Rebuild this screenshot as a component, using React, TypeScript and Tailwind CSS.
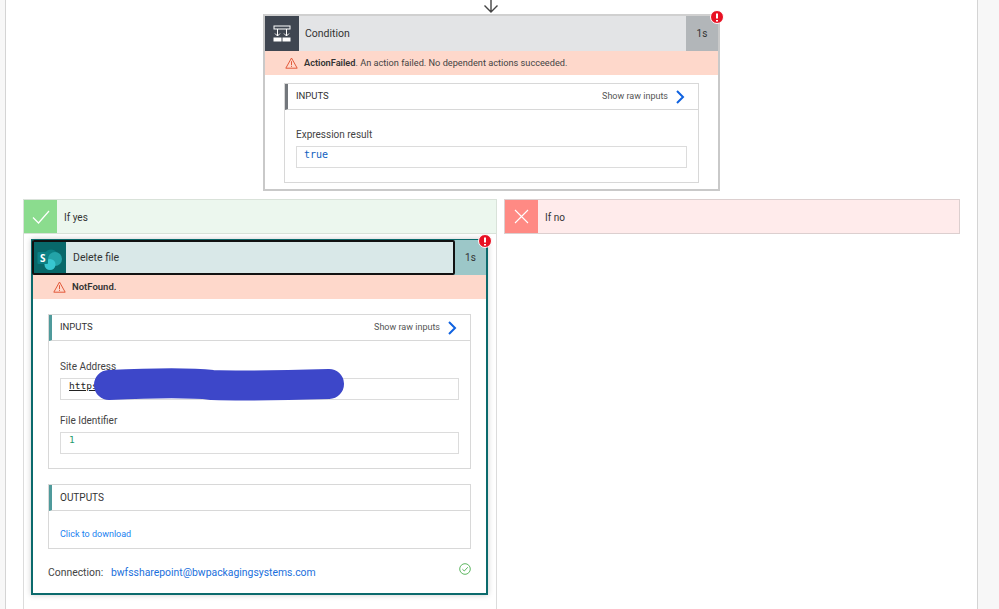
import React from "react";

const font = { fontFamily: 'Roboto, "Noto Sans", sans-serif' };
const mono = { fontFamily: '"DejaVu Sans Mono", monospace' };

function Warn() {
  return (
    <svg width="13" height="12" viewBox="0 0 13 12" fill="none" className="shrink-0">
      <path d="M6.5 1 L12.2 11.2 H0.8 Z" stroke="#e2593a" strokeWidth="1" strokeLinejoin="miter" />
      <path d="M6.5 4.2 V8 M6.5 8.8 V9.9" stroke="#e2593a" strokeWidth="1" />
    </svg>
  );
}

function Badge({ className }: { className: string }) {
  return (
    <div className={"absolute w-[14px] h-[14px] rounded-full bg-[#e81123] border border-white flex items-center justify-center " + className}>
      <svg width="4" height="9" viewBox="0 0 4 9"><path d="M2 0.5 V5.5 M2 7 V8.5" stroke="#fff" strokeWidth="2" /></svg>
    </div>
  );
}

function Chevron() {
  return (
    <svg width="10" height="14" viewBox="0 0 10 14" fill="none">
      <path d="M2 1 L8 7 L2 13" stroke="#0f62e0" strokeWidth="2" />
    </svg>
  );
}

function SectionHead({ title, bar, size, raw }: { title: string; bar: string; size: string; raw?: boolean }) {
  return (
    <div className={"h-[26px] shrink-0 flex items-center border-b border-[#d8d8d8] border-l-[3px] pl-[8px] pr-[13px] justify-between " + bar}>
      <span className={"text-[#333] " + size}>{title}</span>
      {raw && (
        <span className="flex items-center gap-[7px] text-[9px] text-[#555]">
          Show raw inputs <Chevron />
        </span>
      )}
    </div>
  );
}

function SharePointIcon() {
  return (
    <svg width="28" height="26" viewBox="0 0 28 26">
      <circle cx="15" cy="12" r="7.5" fill="#0a7f83" />
      <circle cx="19" cy="14" r="7" fill="#23a3a8" />
      <circle cx="14" cy="19.5" r="5.5" fill="#37c6d0" />
      <rect x="1.5" y="7" width="10.5" height="12" rx="1" fill="#0b8186" />
      <text x="6.8" y="16.5" textAnchor="middle" fontSize="10" fontWeight="700" fill="#fff" fontFamily="Noto Sans">S</text>
    </svg>
  );
}

export default function App() {
  return (
    <div className="w-[999px] h-[609px] overflow-hidden bg-white flex" style={font}>
      <div className="w-[6px] shrink-0 bg-[#f7f7f7] border-r border-[#d4d4d4]" />
      <div className="w-[971px] shrink-0 flex flex-col">
        <div className="h-[14px] shrink-0 ml-[477px] flex items-end">
          <svg width="16" height="15" viewBox="0 0 16 15" fill="none">
            <path d="M8 -2 V13 M1.5 6.5 L8 13 L14.5 6.5" stroke="#444" strokeWidth="1.4" />
          </svg>
        </div>

        {/* Condition */}
        <div className="relative shrink-0 ml-[257px] w-[457px] h-[177px] border-2 border-[#c9c9c9] border-t-[#d0d0d0] flex flex-col bg-white">
          <div className="h-[35px] flex shrink-0 bg-[#e3e4e6]">
            <div className="w-[34px] bg-[#3f4651] flex items-center justify-center">
              <svg width="18" height="18" viewBox="0 0 18 18" fill="none">
                <rect x="1" y="1" width="16" height="3" stroke="#fff" strokeWidth="1" />
                <path d="M4.5 4 V11 M13.5 4 V11 M2 8.5 L4.5 11 L7 8.5 M11 8.5 L13.5 11 L16 8.5" stroke="#fff" strokeWidth="1" />
                <rect x="0.5" y="12.5" width="8" height="4" fill="#fff" />
                <rect x="9.5" y="12.5" width="8" height="4" fill="#fff" />
              </svg>
            </div>
            <div className="flex-1 pl-[6px] flex items-center text-[10.5px] text-[#333]">Condition</div>
            <div className="w-[32px] bg-[#b2b6b9] flex items-center justify-center text-[10px] text-[#333]">1s</div>
          </div>
          <div className="h-[24px] shrink-0 bg-[#fed8cb] flex items-center pl-[20px] gap-[6px] text-[9.2px] text-[#444]">
            <Warn />
            <span><b className="font-semibold text-[#333]">ActionFailed</b>. An action failed. No dependent actions succeeded.</span>
          </div>
          <div className="mt-[8px] mx-[19px] h-[100px] shrink-0 border border-[#d8d8d8] flex flex-col">
            <SectionHead title="INPUTS" bar="border-l-[#73777c]" size="text-[9.5px]" raw />
            <div className="px-[11px] pt-[18px]">
              <div className="text-[10px] leading-[14px] text-[#444]">Expression result</div>
              <div className="mt-[4px] h-[22px] border border-[#dcdcdc] pl-[7px] pt-[1px] text-[10px] leading-[14px] text-[#0f5fc0]" style={mono}>true</div>
            </div>
          </div>
          <Badge className="-top-[6px] -right-[6px]" />
        </div>

        {/* Branches */}
        <div className="flex shrink-0 mt-[8px] ml-[17px]">
          <div className="w-[474px] h-[420px] border-x border-[#dcdcdc] flex flex-col">
            <div className="h-[35px] -mx-px shrink-0 flex border border-[#d9e2d9] bg-[#ecf7ee]">
              <div className="w-[33px] bg-[#8bdc8e] flex items-center justify-center">
                <svg width="18" height="14" viewBox="0 0 18 14" fill="none"><path d="M1 7.5 L6.5 13 L17 1" stroke="#fff" strokeWidth="1.2" /></svg>
              </div>
              <div className="pl-[7px] pt-[2px] flex items-center text-[10px] text-[#333]">If yes</div>
            </div>

            <div className="relative shrink-0 mt-[5px] ml-[7px] w-[457px] h-[356px] border-2 border-t-[1px] border-[#0b6a6c] shadow-[0_0_6px_rgba(0,0,0,0.2)] bg-white flex flex-col">
              <div className="h-[35px] shrink-0 flex bg-[#9cc7c8]">
                <div className="w-[423px] -ml-px flex border-2 border-[#111] rounded-[2px] bg-[#d9e8e8]">
                  <div className="w-[32px] bg-[#08686a] flex items-center justify-center">
                    <SharePointIcon />
                  </div>
                  <div className="pl-[7px] pt-[1px] flex items-center text-[10.5px] text-[#333]">Delete file</div>
                </div>
                <div className="flex-1 flex items-center justify-center text-[10px] text-[#333]">1s</div>
              </div>
              <div className="h-[24px] shrink-0 bg-[#fed8cb] flex items-center pl-[20px] gap-[6px] text-[9.5px]">
                <Warn />
                <b className="font-semibold text-[#333]">NotFound.</b>
              </div>
              <div className="mt-[15px] mx-[15px] h-[155px] border border-[#d8d8d8] flex flex-col shrink-0">
                <SectionHead title="INPUTS" bar="border-l-[#4f9a9b]" size="text-[9.5px]" raw />
                <div className="relative px-[11px] pt-[19px]">
                  <div className="text-[10px] leading-[14px] text-[#444]">Site Address</div>
                  <div className="mt-[4px] h-[22px] border border-[#dcdcdc] pl-[8px] text-[9.5px] leading-[14px] text-[#222]" style={mono}><span className="underline">https</span></div>
                  <div className="mt-[14px] text-[10px] leading-[14px] text-[#444]">File Identifier</div>
                  <div className="mt-[4px] h-[22px] border border-[#dcdcdc] pl-[8px] text-[9.5px] leading-[14px] text-[#1f9b6e]" style={mono}>1</div>
                  <svg width="252" height="34" viewBox="0 0 252 34" fill="none" className="absolute left-[45px] top-[27px]">
                    <path d="M15 17 C60 15 100 15 118 17 C150 18 200 17 235 16" stroke="#3d47c9" strokeWidth="30" strokeLinecap="round" />
                  </svg>
                </div>
              </div>
              <div className="mt-[15px] mx-[15px] h-[65px] border border-[#d8d8d8] flex flex-col shrink-0">
                <SectionHead title="OUTPUTS" bar="border-l-[#4f9a9b]" size="text-[10px]" />
                <div className="pl-[11px] pt-[16px] text-[9px] leading-[14px] text-[#1a7ff0]">Click to download</div>
              </div>
              <div className="mt-[16px] mx-[15px] flex items-center justify-between">
                <span className="text-[10.4px] text-[#444]">Connection:&nbsp;&nbsp; <span className="text-[#1a6fdc]">bwfssharepoint@bwpackagingsystems.com</span></span>
                <svg width="12" height="12" viewBox="0 0 12 12" fill="none" className="-mt-[8px]">
                  <circle cx="6" cy="6" r="5.3" stroke="#4caf50" strokeWidth="0.9" />
                  <path d="M3.4 6.2 L5.3 8 L8.8 4.2" stroke="#4caf50" strokeWidth="0.9" />
                </svg>
              </div>
              <Badge className="-top-[6px] -right-[6px]" />
            </div>
          </div>

          <div className="ml-[7px] w-[456px] h-[35px] flex border border-[#dccfcf] bg-[#ffebeb]">
            <div className="w-[33px] bg-[#ff8a84] flex items-center justify-center">
              <svg width="15" height="15" viewBox="0 0 15 15" fill="none"><path d="M1 1 L14 14 M14 1 L1 14" stroke="#fff" strokeWidth="1.1" /></svg>
            </div>
            <div className="pl-[7px] pt-[2px] flex items-center text-[10px] text-[#333]">If no</div>
          </div>
        </div>
      </div>
      <div className="flex-1 bg-[#f7f7f7] border-l border-[#d4d4d4]" />
    </div>
  );
}
